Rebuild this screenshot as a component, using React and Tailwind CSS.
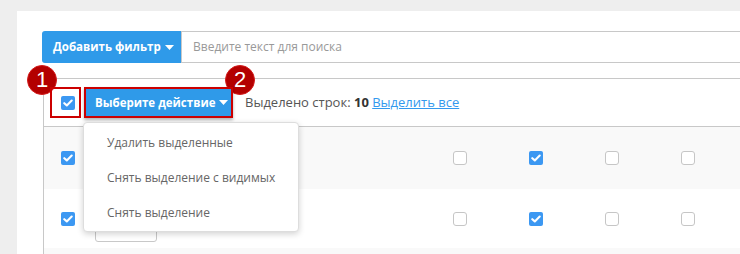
import React from "react";

const font = { fontFamily: '"Open Sans", "Liberation Sans", sans-serif' };

function Check({ checked }) {
  if (checked) {
    return (
      <div className="w-[14px] h-[14px] rounded-[2px] bg-[#3c98f2] flex items-center justify-center shrink-0">
        <svg width="10" height="8" viewBox="0 0 10 8">
          <polyline points="1.3,4.2 3.8,6.4 8.7,1.6" fill="none" stroke="white" strokeWidth="2.1" strokeLinecap="round" strokeLinejoin="round" />
        </svg>
      </div>
    );
  }
  return <div className="w-[14px] h-[14px] rounded-[3px] border border-[#c6c6c6] bg-white shrink-0" />;
}

function Caret() {
  return (
    <svg width="9" height="5" viewBox="0 0 9 5" className="ml-[4px] shrink-0">
      <polygon points="0,0 9,0 4.5,5" fill="white" />
    </svg>
  );
}

function RightChecks({ ml }) {
  return (
    <div className={"flex items-center gap-[62px] " + ml}>
      <Check />
      <Check checked />
      <Check />
      <Check />
    </div>
  );
}

export default function App() {
  return (
    <div className="w-[740px] h-[254px] bg-[#eeeeee] overflow-hidden pl-[17px] pt-[11px]" style={font}>
      <div className="bg-white h-[300px] pl-[25px] pt-[20px]">
        {/* filter bar */}
        <div className="flex h-[32px]">
          <div className="w-[139px] h-full bg-[#2f9ae9] rounded-l-[3px] flex items-center pl-[11px] text-white font-bold text-[11.5px] whitespace-nowrap shrink-0">
            Добавить фильтр
            <Caret />
          </div>
          <div className="flex-1 h-full border border-r-0 border-[#c8c8c8] flex items-center pl-[11px] text-[12px] text-[#999999] whitespace-nowrap">
            Введите текст для поиска
          </div>
        </div>

        {/* table */}
        <div className="mt-[15px] ml-[1px] border-l border-t border-[#c8c8c8]">
          <div className="relative h-[48px] flex items-center pl-[6px] border-b border-[#c8c8c8]">
            <div className="absolute left-[-17px] top-[-14px] w-[30px] h-[30px] rounded-full bg-[#b30000] border border-[#d41a1a] flex items-center justify-center text-white text-[22px] leading-none" style={{ fontFamily: '"Liberation Sans", Arial, sans-serif' }}>
              1
            </div>
            <div className="absolute left-[181px] top-[-14px] w-[30px] h-[30px] rounded-full bg-[#b30000] border border-[#d41a1a] flex items-center justify-center text-white text-[22px] leading-none" style={{ fontFamily: '"Liberation Sans", Arial, sans-serif' }}>
              2
            </div>

            <div className="relative w-[31px] h-[31px] border-2 border-[#cc0000] flex items-center pl-[9px] shrink-0">
              <Check checked />
            </div>
            <div className="relative ml-[3px] w-[149px] h-[31px] border-2 border-[#cc0000] bg-[#2f9ae9] flex items-center pl-[9px] text-white font-bold text-[11.5px] whitespace-nowrap shadow-[0_2px_3px_rgba(0,0,0,0.3)] shrink-0">
              Выберите действие
              <Caret />
            </div>
            <div className="ml-[12px] text-[13px] text-[#555555] whitespace-nowrap">
              Выделено строк: <span className="font-bold text-[#333333]">10</span>{" "}
              <span className="text-[#3399ee] underline">Выделить все</span>
            </div>

            <div className="absolute left-[39px] top-[43px] z-20 w-[216px] bg-white rounded-[4px] border border-[#dddddd] shadow-[0_2px_6px_rgba(0,0,0,0.18)] pt-[2px] pb-[1px] text-[12px] text-[#666666] whitespace-nowrap">
              <div className="h-[35px] flex items-center pl-[23px]">Удалить выделенные</div>
              <div className="h-[35px] flex items-center pl-[23px]">Снять выделение с видимых</div>
              <div className="h-[35px] flex items-center pl-[23px]">Снять выделение</div>
            </div>
          </div>

          <div className="h-[62px] bg-[#f9f9f9] flex items-center pl-[17px]">
            <Check checked />
            <RightChecks ml="ml-[378px]" />
          </div>

          <div className="h-[59px] bg-white flex items-center pl-[17px]">
            <Check checked />
            <div className="self-end mb-[6px] ml-[20px] w-[62px] h-[24px] border border-[#c8c8c8] rounded-[3px] shrink-0" />
            <RightChecks ml="ml-[296px]" />
          </div>

          <div className="h-[40px] bg-[#f9f9f9]" />
        </div>
      </div>
    </div>
  );
}
